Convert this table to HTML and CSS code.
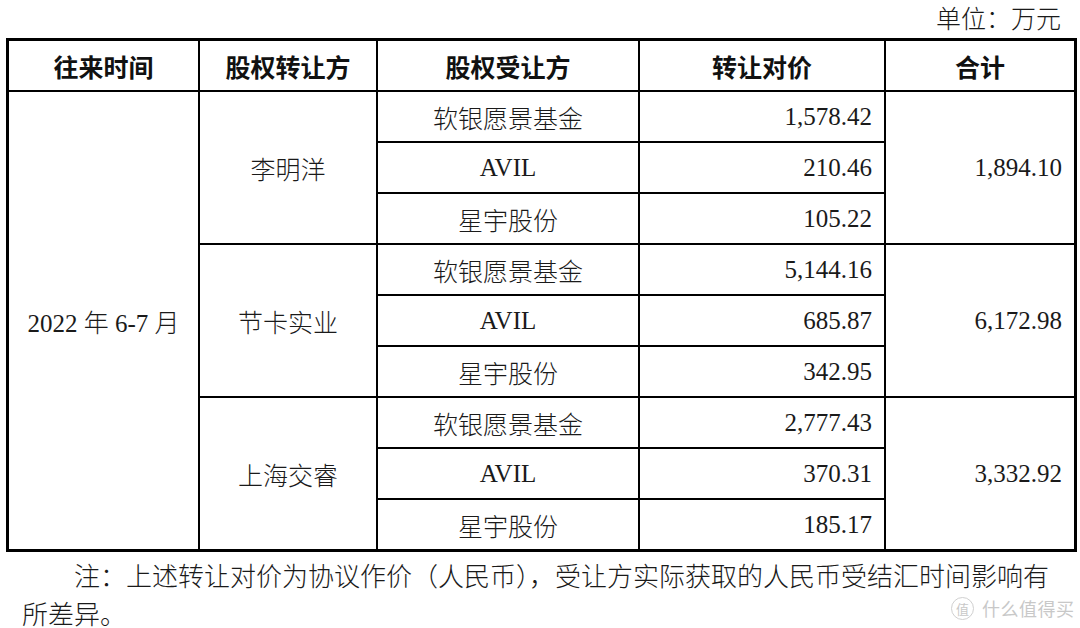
FILE: index.html
```html
<!DOCTYPE html>
<html lang="zh">
<head>
<meta charset="utf-8">
<title>股权转让</title>
<link rel="stylesheet" href="styles.css">
</head>
<body>
<div class="page">
  <div class="unit">单位：万元</div>
  <div class="tbl">
    <div class="th">往来时间</div>
    <div class="th">股权转让方</div>
    <div class="th">股权受让方</div>
    <div class="th">转让对价</div>
    <div class="th">合计</div>

    <div class="td date">2022 年 6-7 月</div>

    <div class="td party">李明洋</div>
    <div class="td">软银愿景基金</div>
    <div class="td num">1,578.42</div>
    <div class="td num total">1,894.10</div>
    <div class="td">AVIL</div>
    <div class="td num">210.46</div>
    <div class="td">星宇股份</div>
    <div class="td num">105.22</div>

    <div class="td party">节卡实业</div>
    <div class="td">软银愿景基金</div>
    <div class="td num">5,144.16</div>
    <div class="td num total">6,172.98</div>
    <div class="td">AVIL</div>
    <div class="td num">685.87</div>
    <div class="td">星宇股份</div>
    <div class="td num">342.95</div>

    <div class="td party">上海交睿</div>
    <div class="td">软银愿景基金</div>
    <div class="td num">2,777.43</div>
    <div class="td num total">3,332.92</div>
    <div class="td">AVIL</div>
    <div class="td num">370.31</div>
    <div class="td">星宇股份</div>
    <div class="td num">185.17</div>
  </div>
  <p class="note">注：上述转让对价为协议作价（人民币），受让方实际获取的人民币受结汇时间影响有所差异。</p>
  <div class="wm"><span class="wm-logo">值</span><span class="wm-text">什么值得买</span></div>
</div>
</body>
</html>
```
FILE: styles.css
```css
html, body {
  margin: 0;
  padding: 0;
  background: #ffffff;
}
.page {
  position: relative;
  width: 1080px;
  height: 628px;
  overflow: hidden;
  color: #1a1a1a;
  font-family: "Liberation Serif", "Noto Sans CJK SC", serif;
}
.unit {
  height: 38px;
  line-height: 34px;
  text-align: right;
  padding-right: 19px;
  font-size: 25px;
  font-family: "Noto Sans CJK SC", sans-serif;
  font-weight: 300;
}
.tbl {
  margin-left: 6px;
  width: 1065px;
  display: grid;
  grid-template-columns: 189px 176px 260px 244px 188px;
  grid-template-rows: 49px repeat(9, 49px);
  gap: 2px;
  padding: 3px;
  background: #000;
}
.th, .td {
  background: #fff;
  display: flex;
  align-items: center;
  justify-content: center;
  font-size: 25px;
  white-space: nowrap;
}
.th {
  font-family: "Noto Sans CJK SC", sans-serif;
  font-weight: 700;
  color: #111;
}
.td {
  font-weight: 300;
}
.date {
  grid-column: 1;
  grid-row: 2 / span 9;
}
.party {
  grid-column: 2;
  grid-row: span 3;
}
.total {
  grid-column: 5;
  grid-row: span 3;
}
.num {
  justify-content: flex-end;
  padding-right: 12px;
  font-weight: 400;
}
.note {
  margin: 4px 0 0 22px;
  width: 1045px;
  font-size: 26px;
  line-height: 38px;
  text-indent: 2em;
  font-family: "Noto Sans CJK SC", sans-serif;
  font-weight: 300;
}
.wm {
  position: absolute;
  left: 951px;
  top: 595px;
  display: flex;
  align-items: center;
  gap: 8px;
  color: #c8c8c8;
  font-family: "Noto Sans CJK SC", sans-serif;
}
.wm-logo {
  display: flex;
  align-items: center;
  justify-content: center;
  width: 21px;
  height: 21px;
  border: 1.5px solid #d0d0d0;
  border-radius: 50%;
  font-size: 13px;
  line-height: 13px;
}
.wm-text {
  font-size: 18px;
  line-height: 26px;
  letter-spacing: 0.5px;
}
```
